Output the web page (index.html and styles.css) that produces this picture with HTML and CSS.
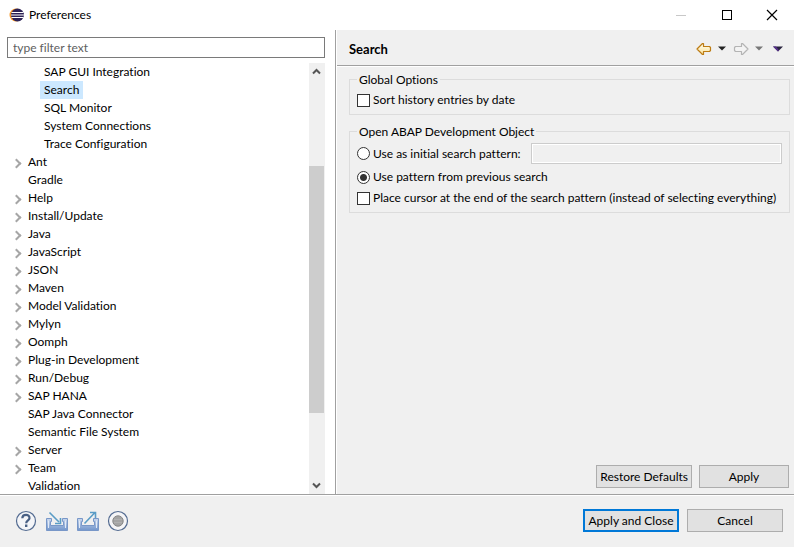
FILE: index.html
```html
<!DOCTYPE html>
<html lang="en">
<head>
<meta charset="utf-8">
<title>Preferences</title>
<link rel="stylesheet" href="styles.css">
</head>
<body>
<div class="dialog">
  <header class="titlebar">
    <svg class="logo" width="16" height="14" viewBox="0 0 16 14"><circle cx="7" cy="7" r="6.5" fill="#f7941e"/><circle cx="8.500" cy="7" r="6.500" fill="#2c2255"/><path d="M2.500 4.500h12M2 7h13M2.500 9.500h12" stroke="#fff" stroke-width="1.200"/></svg>
    <h1 class="title">Preferences</h1>
    <div class="window-controls">
      <button class="window-button" aria-label="Minimize" disabled><svg width="12" height="12"><path d="M1 6.500h10" stroke="#c8c8c8"/></svg></button>
      <button class="window-button" aria-label="Maximize"><svg width="12" height="12"><rect x="1.500" y="1.500" width="9" height="9" fill="none" stroke="#000"/></svg></button>
      <button class="window-button" aria-label="Close"><svg width="12" height="12"><path d="M1 1l10 10M11 1L1 11" stroke="#000" stroke-width="1.200"/></svg></button>
    </div>
  </header>

  <main class="content">
    <nav class="sidebar" aria-label="Preference pages">
      <input class="filter" type="text" placeholder="type filter text" aria-label="Filter preference pages">
      <div class="tree-area">
        <ul class="tree">
          <li class="child"><span>SAP GUI Integration</span></li>
          <li class="child"><span class="selected">Search</span></li>
          <li class="child"><span>SQL Monitor</span></li>
          <li class="child"><span>System Connections</span></li>
          <li class="child"><span>Trace Configuration</span></li>
          <li class="branch"><span>Ant</span></li>
          <li><span>Gradle</span></li>
          <li class="branch"><span>Help</span></li>
          <li class="branch"><span>Install/Update</span></li>
          <li class="branch"><span>Java</span></li>
          <li class="branch"><span>JavaScript</span></li>
          <li class="branch"><span>JSON</span></li>
          <li class="branch"><span>Maven</span></li>
          <li class="branch"><span>Model Validation</span></li>
          <li class="branch"><span>Mylyn</span></li>
          <li class="branch"><span>Oomph</span></li>
          <li class="branch"><span>Plug-in Development</span></li>
          <li class="branch"><span>Run/Debug</span></li>
          <li class="branch"><span>SAP HANA</span></li>
          <li><span>SAP Java Connector</span></li>
          <li><span>Semantic File System</span></li>
          <li class="branch"><span>Server</span></li>
          <li class="branch"><span>Team</span></li>
          <li><span>Validation</span></li>
        </ul>
        <div class="scrollbar">
          <button class="scroll-button" aria-label="Scroll up"><svg width="9" height="7"><path d="M1 5.500L4.500 2 8 5.500" fill="none" stroke="#555" stroke-width="2"/></svg></button>
          <div class="track"><div class="thumb"></div></div>
          <button class="scroll-button" aria-label="Scroll down"><svg width="9" height="7"><path d="M1 1.500L4.500 5 8 1.500" fill="none" stroke="#555" stroke-width="2"/></svg></button>
        </div>
      </div>
    </nav>

    <section class="page">
      <div class="page-header">
        <h2 class="page-title">Search</h2>
        <div class="history">
          <button class="icon-button" aria-label="Back"><svg width="16" height="14"><defs><linearGradient id="gold" x2="0" y2="1"><stop offset="0" stop-color="#fffef0"/><stop offset="1" stop-color="#fbe29a"/></linearGradient></defs><path d="M1 7L6.500 1.500H7.500V4.500H13.500L14.500 5.500V8.500L13.500 9.500H7.500V12.500H6.500Z" fill="url(#gold)" stroke="#bd7c14" stroke-width="1.200" stroke-linejoin="round"/></svg></button>
          <button class="icon-button" aria-label="Back history"><svg width="8" height="5"><path d="M0 0.500h8L4 4.500z" fill="#222"/></svg></button>
          <button class="icon-button forward" aria-label="Forward" disabled><svg width="16" height="14"><path d="M15 7L9.500 1.500H8.500V4.500H2.500L1.500 5.500V8.500L2.500 9.500H8.500V12.500H9.500Z" fill="#f3f3f3" stroke="#b4b4b4" stroke-width="1.200" stroke-linejoin="round"/></svg></button>
          <button class="icon-button" aria-label="Forward history" disabled><svg width="8" height="5"><path d="M0 0.500h8L4 4.500z" fill="#777"/></svg></button>
          <button class="icon-button menu" aria-label="View menu"><svg width="10" height="6"><path d="M0 0.500h10L5 5.500z" fill="#27223d"/><path d="M0 .5h3l3 4-1 1z" fill="#56308c"/></svg></button>
        </div>
      </div>

      <div class="page-body">
        <fieldset class="group">
          <legend>Global Options</legend>
          <label class="option"><input type="checkbox">Sort history entries by date</label>
        </fieldset>
        <fieldset class="group">
          <legend>Open ABAP Development Object</legend>
          <div class="pattern-row">
            <label class="option"><input type="radio" name="pattern">Use as initial search pattern:</label>
            <input class="pattern" type="text" aria-label="Initial search pattern" disabled>
          </div>
          <label class="option"><input type="radio" name="pattern" checked>Use pattern from previous search</label>
          <label class="option"><input type="checkbox">Place cursor at the end of the search pattern (instead of selecting everything)</label>
        </fieldset>
        <div class="page-actions">
          <button class="button">Restore Defaults</button>
          <button class="button">Apply</button>
        </div>
      </div>
    </section>
  </main>

  <footer class="footer">
    <div class="tools">
      <button class="icon-button" aria-label="Help"><svg width="22" height="22"><circle cx="11" cy="11" r="9.500" fill="#f4f5f8" stroke="#536b91" stroke-width="1.200"/><path d="M7.300 8.300C7.500 3.800 14.700 3.900 14.500 8.100 14.400 10.400 11.200 10.400 11.200 13.300" fill="none" stroke="#496084" stroke-width="2.200"/><rect x="10" y="14.500" width="2.400" height="2.500" fill="#496084"/></svg></button>
      <button class="icon-button" aria-label="Import"><svg width="23" height="22"><defs><linearGradient id="tray" x2="0" y2="1"><stop offset="0" stop-color="#c9d8ee"/><stop offset="1" stop-color="#7295cb"/></linearGradient></defs><path d="M1.500 8.500H6.500V11.500H5.500V15.500H18.500V11.500H17.500V8.500H22.500V20.500H1.500Z" fill="url(#tray)" stroke="#7897c8"/><path d="M3.500 10.500V18M20.500 10.500V18" stroke="#e2eaf6"/><path d="M4.500 2.500L14 12M15.500 8V13.500H10" fill="none" stroke="#5a9cc6" stroke-width="1.600"/></svg></button>
      <button class="icon-button" aria-label="Export"><svg width="23" height="22"><path d="M1.500 8.500H6.500V11.500H5.500V15.500H18.500V11.500H17.500V8.500H22.500V20.500H1.500Z" fill="url(#tray)" stroke="#7897c8"/><path d="M3.500 10.500V18M20.500 10.500V18" stroke="#e2eaf6"/><path d="M8.500 13.500L18.500 3M14 2.500H19.500V8" fill="none" stroke="#5a9cc6" stroke-width="1.600"/></svg></button>
      <button class="icon-button" aria-label="Record preferences"><svg width="22" height="22"><circle cx="11" cy="11" r="9.500" fill="#f5f5f7" stroke="#536b91" stroke-width="1.200"/><circle cx="11" cy="11" r="5.200" fill="#a4a4a4" stroke="#888"/><path d="M7 9.500h8M7 12.500h8" stroke="#b0b0b0"/></svg></button>
    </div>
    <button class="button primary">Apply and Close</button>
    <button class="button wide">Cancel</button>
  </footer>
</div>
</body>
</html>
```
FILE: styles.css
```css
*,
*::before {
  box-sizing: border-box;
}

body {
  margin: 0;
  background: #fff;
  color: #000;
  font: 12px/18px Lato, "Open Sans", sans-serif;
  font-variant-ligatures: none;
}

button,
input {
  margin: 0;
  font: inherit;
  font-variant-ligatures: none;
  color: inherit;
}

svg {
  display: block;
}

.dialog {
  display: flex;
  flex-direction: column;
  height: 100vh;
}

.titlebar {
  display: flex;
  align-items: center;
  gap: 4px;
  height: 30px;
  padding-left: 9px;
}

.title,
.page-title {
  margin: 0;
  font-size: 12px;
  font-weight: 400;
}

.window-controls {
  display: flex;
  height: 28px;
  margin-left: auto;
}

.window-button {
  display: flex;
  align-items: center;
  justify-content: center;
  width: 46px;
  padding: 0;
  border: 0;
  background: none;
}

.window-button:last-child {
  width: 44px;
}

.content {
  display: grid;
  grid-template-columns: 336px 1fr;
  flex: 1;
  min-height: 0;
}

.sidebar {
  display: flex;
  flex-direction: column;
  gap: 5px;
  min-height: 0;
  padding: 7px 10px 0 7px;
  border-right: 1px solid #a0a0a0;
}

.filter {
  height: 21px;
  padding: 0 5px;
  border: 1px solid #7a7a7a;
  background: #fff;
}

.filter::placeholder {
  color: #606060;
}

.tree-area {
  display: flex;
  flex: 1;
  min-height: 0;
}

.tree {
  flex: 1;
  margin: 0;
  padding: 0;
  overflow: hidden;
  list-style: none;
}

.tree li {
  display: flex;
  align-items: center;
  height: 18px;
  padding-left: 17px;
}

.tree .child {
  padding-left: 33px;
}

.tree span {
  padding: 0 4px;
}

.tree .selected {
  background: #cce8ff;
}

.tree .branch {
  padding-left: 6px;
}

.branch::before {
  content: "";
  width: 7px;
  height: 7px;
  margin: 2px 4px 0 0;
  border: solid #a6a6a6;
  border-width: 2px 2px 0 0;
  transform: rotate(45deg);
}

.scrollbar {
  display: flex;
  flex-direction: column;
  width: 16px;
  background: #f0f0f0;
}

.scroll-button {
  display: flex;
  align-items: center;
  justify-content: center;
  height: 17px;
  padding: 0 2px 0 0;
  border: 0;
  background: none;
}

.track {
  display: grid;
  grid-template-rows: 86fr 247fr 64fr;
  flex: 1;
}

.thumb {
  grid-row: 2;
  margin-right: 1px;
  background: #cdcdcd;
}

.page {
  display: flex;
  flex-direction: column;
  min-width: 0;
  border-left: 1px solid #fff;
  background: #f0f0f0;
}

.page-header {
  display: flex;
  align-items: center;
  justify-content: space-between;
  height: 36px;
  padding: 2px 11px 0 12px;
  border-bottom: 1px solid #a0a0a0;
}

.page-title {
  font-size: 13px;
  font-weight: 700;
}

.history {
  display: flex;
  align-items: center;
  gap: 6px;
}

.icon-button {
  padding: 0;
  border: 0;
  background: none;
}

.history .forward {
  margin-left: 1px;
}

.history .menu {
  margin-left: 4px;
}

.page-body {
  display: flex;
  flex: 1;
  flex-direction: column;
  gap: 8px;
  padding: 4px 4px 6px 12px;
  border-top: 1px solid #fff;
}

.group {
  min-width: 0;
  margin: 0;
  padding: 3px 7px 5px;
  border: 1px solid #dcdcdc;
}

.group legend {
  padding: 0 2px;
  line-height: 17px;
}

.option {
  display: flex;
  align-items: center;
  gap: 3px;
  height: 18px;
  white-space: nowrap;
}

.option + .option {
  margin-top: 3px;
}

.option input {
  width: 13px;
  height: 13px;
  border: 1px solid #333;
  background: #fff;
  appearance: none;
}

.option input[type="radio"] {
  border-radius: 50%;
}

.option input[type="radio"]:checked {
  background: radial-gradient(circle, #333 3px, #fff 4px);
}

.pattern-row {
  display: flex;
  align-items: center;
  gap: 10px;
  margin-bottom: 4px;
}

.pattern {
  flex: 1;
  min-width: 0;
  height: 21px;
  border: 1px solid #ccc;
  background: #f0f0f0;
  box-shadow: inset 0 0 0 1px #fff;
}

.page-actions {
  display: flex;
  justify-content: flex-end;
  gap: 7px;
  margin: auto 1px 0 0;
}

.button {
  min-width: 90px;
  height: 23px;
  padding: 0 3px;
  border: 1px solid #adadad;
  background: #e1e1e1;
  line-height: 18px;
}

.button.primary,
.button.wide {
  min-width: 96px;
}

.button.primary {
  border: 2px solid #0078d7;
}

.footer {
  display: flex;
  align-items: center;
  gap: 8px;
  height: 53px;
  padding: 0 11px 1px 15px;
  border-top: 1px solid #a0a0a0;
  background: #f0f0f0;
  box-shadow: inset 0 1px #fff;
}

.tools {
  display: flex;
  gap: 8px;
  margin-right: auto;
}
```
